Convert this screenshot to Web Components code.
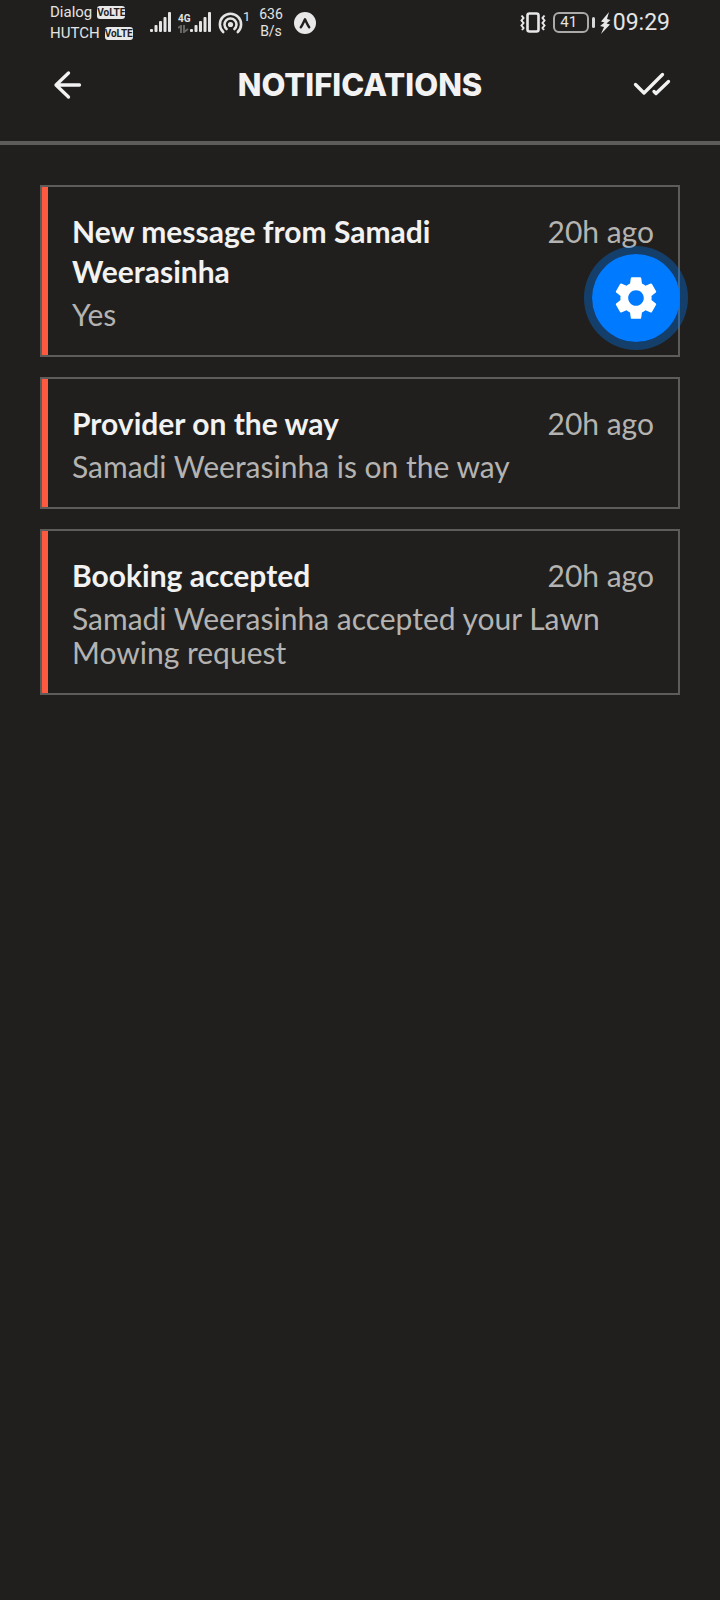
<!DOCTYPE html>
<html lang="en">
<head>
<meta charset="utf-8">
<meta name="viewport" content="width=device-width, initial-scale=1">
<title>Notifications</title>
<style>
	body {
		margin: 0;
		min-height: 100vh;
		background: #201f1d;
		color: #f2f2f2;
		font-family: Lato, "Liberation Sans", sans-serif;
		--line: #5d5c5a;
		--muted: #b4b3b1;
		--accent: #ff5a3f;
	}
</style>
</head>
<body>
<notifications-page>
	<status-bar slot="status"></status-bar>
	<page-header slot="header">NOTIFICATIONS</page-header>
	<notification-card>
		<span slot="title">New message from Samadi Weerasinha</span>
		<span slot="time">20h ago</span>
		Yes
	</notification-card>
	<notification-card>
		<span slot="title">Provider on the way</span>
		<span slot="time">20h ago</span>
		Samadi Weerasinha is on the way
	</notification-card>
	<notification-card>
		<span slot="title">Booking accepted</span>
		<span slot="time">20h ago</span>
		Samadi Weerasinha accepted your Lawn Mowing request
	</notification-card>
	<settings-button slot="floating"></settings-button>
</notifications-page>

<script>
function define(name, html) {
	const template = document.createElement('template')
	template.innerHTML = html

	customElements.define(name, class extends HTMLElement {
		constructor() {
			super()
			this.attachShadow({ mode: 'open' })
			this.shadowRoot.appendChild(template.content.cloneNode(true))
		}
	})
}

define('volte-badge', `
	<style>
		:host {
			display: inline-block;
			border-radius: 3px;
			background: #e8e8e8;
			color: #201f1d;
			font: bold 10px/13px Roboto, sans-serif;
		}
	</style>
	<slot></slot>
`)

define('signal-bars', `
	<style>
		:host { display: block; }
		svg { display: block; }
	</style>
	<svg width="22" height="21" viewBox="0 0 22 21" fill="#e4e4e4" aria-hidden="true">
		<rect x="0" y="17" width="3" height="3" rx="1"/>
		<rect x="4.5" y="13" width="3" height="7" rx="1"/>
		<rect x="9" y="9" width="3" height="11" rx="1"/>
		<rect x="13.5" y="5" width="3" height="15" rx="1"/>
		<rect x="18" y="0" width="3" height="20" rx="1"/>
	</svg>
`)

define('battery-level', `
	<style>
		:host {
			display: flex;
			align-items: center;
			gap: 3px;
		}
		.cell {
			box-sizing: border-box;
			width: 36px;
			height: 21px;
			padding-right: 4px;
			border: 2px solid #aaa;
			border-radius: 6px;
			font: 15px/17px Roboto, sans-serif;
			text-align: center;
		}
		.tip {
			width: 3px;
			height: 11px;
			border-radius: 2px;
			background: #d8d8d8;
		}
	</style>
	<div class="cell"><slot></slot></div>
	<div class="tip"></div>
`)

define('status-bar', `
	<style>
		:host {
			display: flex;
			justify-content: space-between;
			height: 46px;
			padding: 0 50px;
			color: #e4e4e4;
			font: 15px/21px Roboto, sans-serif;
		}
		svg { display: block; flex: none; }
		.group {
			display: flex;
			align-items: center;
			height: 45px;
		}
		.carriers {
			width: 100px;
		}
		.carrier {
			display: flex;
			align-items: center;
			gap: 5px;
		}
		.network {
			width: 12px;
			margin: 0 0 0 6px;
			font: bold 10px/12px Roboto, sans-serif;
		}
		.hotspot { margin-left: 6px; }
		.clients {
			align-self: flex-start;
			width: 15px;
			padding-top: 9px;
			font-size: 13px;
			line-height: 15px;
		}
		.speed {
			width: 26px;
			margin-right: 10px;
			font-size: 14px;
			line-height: 17px;
			text-align: center;
		}
		battery-level { margin: 0 5px 0 7px; }
		.clock {
			margin-left: 2px;
			font-size: 23px;
			line-height: 27px;
		}
	</style>
	<div class="group">
		<div class="carriers">
			<div class="carrier">Dialog <volte-badge>VoLTE</volte-badge></div>
			<div class="carrier">HUTCH <volte-badge>VoLTE</volte-badge></div>
		</div>
		<signal-bars></signal-bars>
		<div class="network">
			4G
			<svg width="11" height="8" viewBox="0 0 11 8" fill="none" stroke="#666" stroke-width="2" aria-hidden="true">
				<path d="M0 3L3 1V8M6 0V7L10 4"/>
			</svg>
		</div>
		<signal-bars></signal-bars>
		<svg class="hotspot" width="25" height="22" viewBox="0 0 25 22" fill="none" stroke="#e4e4e4" stroke-width="2.6" stroke-linecap="round" aria-hidden="true">
			<path d="M5.2 20A10.6 10.6 0 1 1 19.8 20"/>
			<path d="M8.6 17A6 6 0 1 1 16.4 17"/>
			<circle cx="12.5" cy="12.5" r="2.6" fill="#e4e4e4" stroke="none"/>
		</svg>
		<div class="clients">1</div>
		<div class="speed">636<br>B/s</div>
		<svg width="22" height="22" viewBox="0 0 22 22" aria-hidden="true">
			<circle cx="11" cy="11" r="11" fill="#e8e8e8"/>
			<path d="M6.8 15.2C8.6 13 9.6 10 11 7.2c1.4 2.8 2.4 5.8 4.2 8" fill="none" stroke="#201f1d" stroke-width="2.4" stroke-linecap="round" stroke-linejoin="round"/>
		</svg>
	</div>
	<div class="group">
		<svg width="26" height="21" viewBox="0 0 26 21" fill="none" stroke="#e8e8e8" stroke-width="2" aria-hidden="true">
			<rect x="7.5" y="1.5" width="11" height="18" rx="2" stroke-width="2.6"/>
			<path d="M1.5 3.5l2 2.5-2 2.5 2 2.5-2 2.5 2 2.5-1.5 2M24.5 3.5l-2 2.5 2 2.5-2 2.5 2 2.5-2 2.5 1.5 2"/>
		</svg>
		<battery-level>41</battery-level>
		<svg width="11" height="22" viewBox="0 0 11 22" fill="#e8e8e8" aria-hidden="true">
			<path d="M9 0L1 9.5L4.5 10.5L0 14L4 15L1 22L10 12.5L6.5 11.5L10.5 8L7 7z"/>
		</svg>
		<div class="clock">09:29</div>
	</div>
`)

define('page-header', `
	<style>
		:host {
			display: grid;
			grid-template-columns: 40px 1fr 40px;
			align-items: center;
			padding: 19px 48px 36px;
			border-bottom: 4px solid var(--line);
		}
		button {
			width: 40px;
			height: 40px;
			padding: 0;
			border: 0;
			background: none;
			color: inherit;
		}
		svg {
			display: block;
			fill: none;
			stroke: currentColor;
			stroke-width: 3.3;
			stroke-linecap: round;
			stroke-linejoin: round;
		}
		h1 {
			margin: 0;
			font: 800 31px/40px Inter, "Liberation Sans", sans-serif;
			text-align: center;
		}
	</style>
	<button aria-label="Back">
		<svg width="40" height="40" viewBox="0 0 40 40">
			<path d="M20.5 8L8 20l12.5 12M8 20h23.5"/>
		</svg>
	</button>
	<h1><slot></slot></h1>
	<button aria-label="Mark all as read">
		<svg width="40" height="40" viewBox="0 0 40 40">
			<path d="M3.5 19.5l8.5 8.5L30.500 9.5M22 26.5l2 2L36.5 16.5"/>
		</svg>
	</button>
`)

define('notification-card', `
	<style>
		:host {
			display: flex;
			border: 2px solid var(--line);
			font-size: 30px;
		}
		.stripe {
			flex: none;
			width: 6px;
			background: var(--accent);
		}
		.body {
			flex: 1;
			padding: 24px;
		}
		.top {
			display: flex;
			justify-content: space-between;
			gap: 24px;
			margin-bottom: 6px;
			line-height: 40px;
		}
		h2 {
			flex: 1;
			margin: 0;
			font-size: inherit;
			font-weight: 700;
		}
		.time { color: var(--muted); }
		p {
			margin: 0;
			color: var(--muted);
			line-height: 34px;
		}
	</style>
	<div class="stripe"></div>
	<div class="body">
		<div class="top">
			<h2><slot name="title"></slot></h2>
			<div class="time"><slot name="time"></slot></div>
		</div>
		<p><slot></slot></p>
	</div>
`)

define('settings-button', `
	<style>
		:host {
			position: absolute;
			top: 246px;
			right: 32px;
		}
		button {
			display: grid;
			place-items: center;
			width: 104px;
			height: 104px;
			padding: 0;
			border: 8px solid rgba(0, 122, 255, .35);
			border-radius: 50%;
			background: #007aff;
			background-clip: padding-box;
			color: #fff;
		}
	</style>
	<button aria-label="Settings">
		<svg width="52" height="52" viewBox="0 0 24 24" fill="currentColor">
			<path d="M19.14 12.94c.04-.3.06-.61.06-.94 0-.32-.02-.64-.07-.94l2.03-1.58c.18-.14.23-.41.12-.61l-1.92-3.32c-.12-.22-.37-.29-.59-.22l-2.39.96c-.5-.38-1.03-.7-1.62-.94l-.36-2.54c-.04-.24-.24-.41-.48-.41h-3.84c-.24 0-.43.17-.47.41l-.36 2.54c-.59.24-1.13.57-1.62.94l-2.39-.96c-.22-.08-.47 0-.59.22L2.74 8.87c-.12.21-.08.47.12.61l2.03 1.58c-.05.3-.09.63-.09.94s.02.64.07.94l-2.03 1.58c-.18.14-.23.41-.12.61l1.92 3.32c.12.22.37.29.59.22l2.39-.96c.5.38 1.03.7 1.62.94l.36 2.54c.05.24.24.41.48.41h3.84c.24 0 .44-.17.47-.41l.36-2.54c.59-.24 1.13-.56 1.62-.94l2.39.96c.22.08.47 0 .59-.22l1.92-3.32c.12-.22.07-.47-.12-.61l-2.01-1.58zM12 15.6c-1.98 0-3.6-1.62-3.6-3.6s1.62-3.6 3.6-3.6 3.6 1.62 3.6 3.6-1.62 3.6-3.6 3.6z"/>
		</svg>
	</button>
`)

define('notifications-page', `
	<style>
		:host { display: block; }
		main {
			display: flex;
			flex-direction: column;
			gap: 20px;
			padding: 40px;
		}
	</style>
	<slot name="status"></slot>
	<slot name="header"></slot>
	<main><slot></slot></main>
	<slot name="floating"></slot>
`)
</script>
</body>
</html>
